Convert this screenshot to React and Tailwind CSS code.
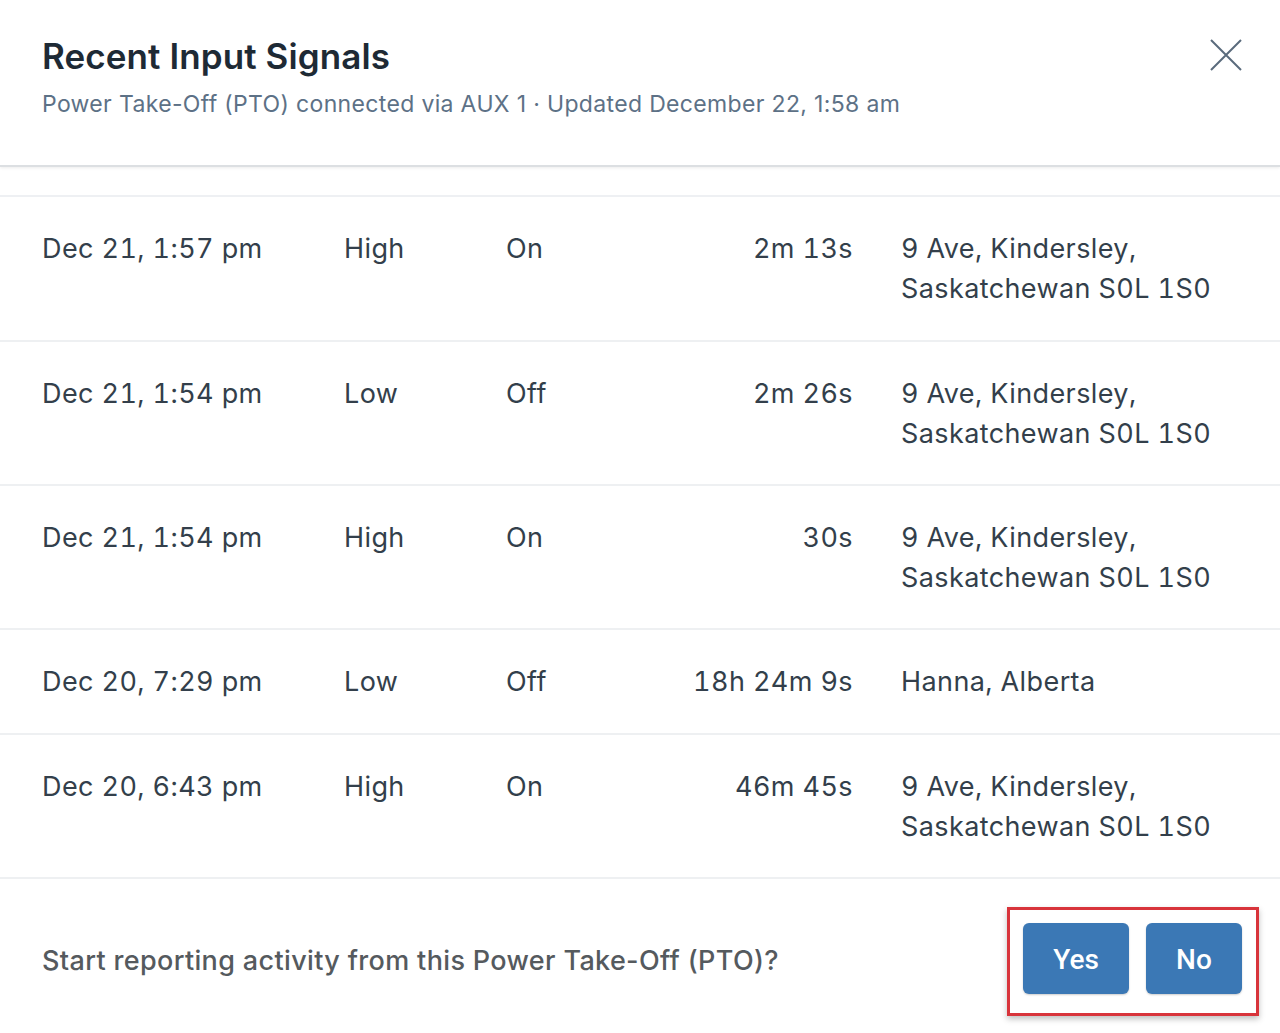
import React from "react";

const rows = [
  { date: "Dec 21, 1:57 pm", level: "High", state: "On", dur: "2m 13s", loc: ["9 Ave, Kindersley,", "Saskatchewan S0L 1S0"], extra: true },
  { date: "Dec 21, 1:54 pm", level: "Low", state: "Off", dur: "2m 26s", loc: ["9 Ave, Kindersley,", "Saskatchewan S0L 1S0"] },
  { date: "Dec 21, 1:54 pm", level: "High", state: "On", dur: "30s", loc: ["9 Ave, Kindersley,", "Saskatchewan S0L 1S0"] },
  { date: "Dec 20, 7:29 pm", level: "Low", state: "Off", dur: "18h 24m 9s", loc: ["Hanna, Alberta"], extra: true },
  { date: "Dec 20, 6:43 pm", level: "High", state: "On", dur: "46m 45s", loc: ["9 Ave, Kindersley,", "Saskatchewan S0L 1S0"] },
];

export default function App() {
  return (
    <div className="w-[1280px] h-[1033px] bg-white overflow-hidden flex flex-col" style={{ fontFamily: "Inter, 'Noto Sans', sans-serif" }}>
      <div className="relative h-[167px] shrink-0 border-b-2 border-[#dcdfe2] shadow-[0_1px_3px_rgba(0,0,0,0.08)] pl-[42px] pt-[34px]">
        <h1 className="text-[35px] leading-[44px] font-semibold text-[#1e2a35] tracking-[0.1px]">Recent Input Signals</h1>
        <p className="mt-[11px] text-[23px] leading-[30px] text-[#5d7186] tracking-[0.34px]">Power Take-Off (PTO) connected via AUX 1 · Updated December 22, 1:58 am</p>
        <svg className="absolute left-[1210px] top-[39px]" width="32" height="32" viewBox="0 0 32 32" fill="none" stroke="#5a6b7c" strokeWidth="2">
          <path d="M1 1L31 31M31 1L1 31" />
        </svg>
      </div>
      <div className="h-[30px] shrink-0 border-b-2 border-[#eef0f3]"></div>
      <div className="flex flex-col">
        {rows.map((r, i) => (
          <div key={i} className={"flex pl-[42px] pt-[32px] border-b-2 border-[#eef0f2] text-[27px] leading-[40px] text-[#333f4b] tracking-[0.4px] tabular-nums " + (r.extra ? "pb-[31px]" : "pb-[30px]")}>
            <div className="w-[302px] shrink-0">{r.date}</div>
            <div className="w-[162px] shrink-0">{r.level}</div>
            <div className="w-[120px] shrink-0">{r.state}</div>
            <div className="w-[227px] shrink-0 text-right">{r.dur}</div>
            <div className="pl-[48px]">
              {r.loc.map((l, j) => (
                <div key={j}>{l}</div>
              ))}
            </div>
          </div>
        ))}
      </div>
      <div className="flex items-center justify-between pl-[42px] pr-[21px] pt-[28px]">
        <div className="text-[27px] font-medium text-[#555a5e] tracking-[0.35px]">Start reporting activity from this Power Take-Off (PTO)?</div>
        <div className="flex gap-[17px] border-[3px] border-[#d8343b] pl-[13px] pr-[14px] pt-[13px] pb-[19px] shadow-[0_3px_6px_rgba(0,0,0,0.25)]">
          <button className="w-[106px] h-[71px] pt-[3px] rounded-[6px] bg-[#3b78b5] text-white text-[28px] font-medium shadow-[0_1px_2px_rgba(0,0,0,0.2)]" style={{ fontFamily: "Roboto, sans-serif" }}>Yes</button>
          <button className="w-[96px] h-[71px] pt-[3px] rounded-[6px] bg-[#3b78b5] text-white text-[28px] font-medium shadow-[0_1px_2px_rgba(0,0,0,0.2)]" style={{ fontFamily: "Roboto, sans-serif" }}>No</button>
        </div>
      </div>
    </div>
  );
}
